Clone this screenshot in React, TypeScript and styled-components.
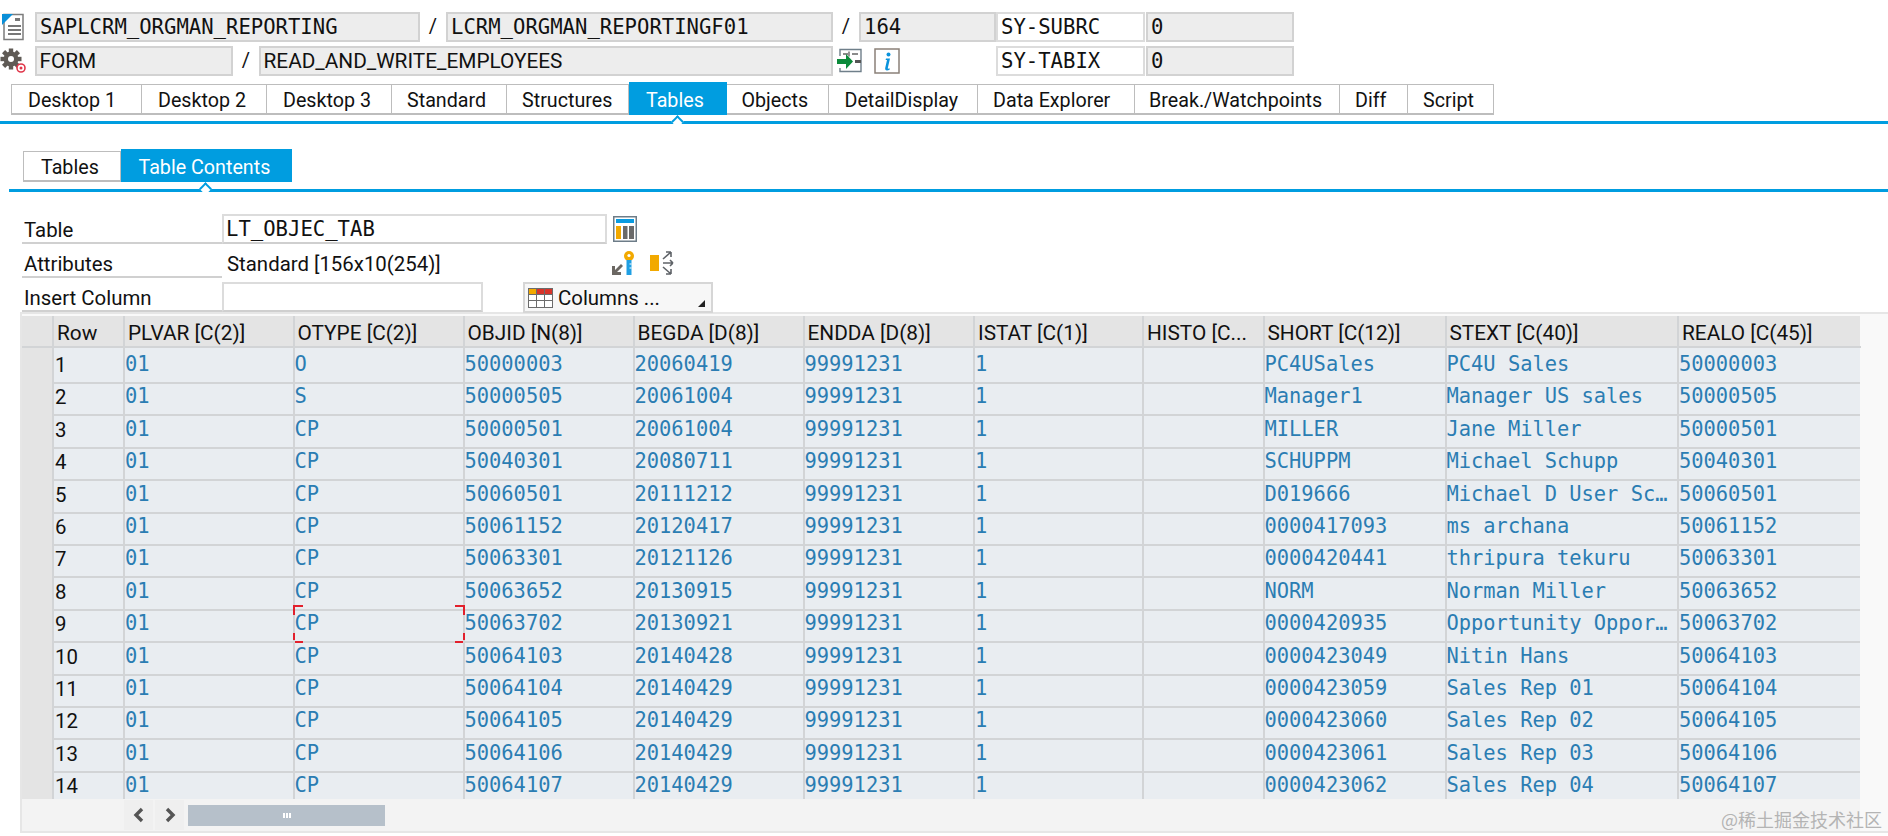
import React from "react";
import styled, { createGlobalStyle, css } from "styled-components";

const Global = createGlobalStyle`
  html, body { margin: 0; padding: 0; background: #fff; }
  #root { width: 1888px; height: 836px; overflow: hidden; }
`;

const UI = `Roboto, "Liberation Sans", sans-serif`;
const MONO = `"DejaVu Sans Mono", "Liberation Mono", monospace`;
const BLUE = "#009de0";
const GRID = "#d2d4d6";

const Page = styled.div`
  width: 1888px;
  height: 836px;
  position: relative;
  overflow: hidden;
  background: #fff;
  color: #111;
  font-family: ${UI};
  font-size: 20.4px;
`;

const Header = styled.div`
  padding-top: 12px;
  display: flex;
  flex-direction: column;
  gap: 4px;
`;

const Line = styled.div`
  display: flex;
  height: 30px;
  align-items: stretch;
`;

const IconSlot = styled.div<{ $w: number }>`
  width: ${(p) => p.$w}px;
  flex: none;
  display: flex;
  align-items: center;
`;

const Field = styled.div<{ $w: number; $mono?: boolean; $white?: boolean }>`
  width: ${(p) => p.$w}px;
  flex: none;
  box-sizing: border-box;
  border: 2px solid ${(p) => (p.$white ? "#dcdcdc" : "#d2d2d2")};
  background: ${(p) => (p.$white ? "#fff" : "#ededed")};
  padding-left: ${(p) => (p.$mono ? 3 : 2.5)}px;
  line-height: 26px;
  font-family: ${(p) => (p.$mono ? MONO : UI)};
  font-size: ${(p) => (p.$mono ? "20.6px" : "20.8px")};
  white-space: nowrap;
  overflow: hidden;
`;

const Slash = styled.div`
  width: 26px;
  flex: none;
  text-align: center;
  line-height: 28px;
  font-size: 20px;
`;

const Spacer = styled.div<{ $w: number }>`
  width: ${(p) => p.$w}px;
  flex: none;
`;

const TabBar = styled.div`
  margin-top: 6px;
  height: 39px;
  padding-left: 11px;
  display: flex;
  align-items: flex-start;
  border-bottom: 3px solid ${BLUE};
`;

const SubBar = styled(TabBar)`
  margin: 25px 0 0 9px;
  height: 40px;
  padding-left: 14px;
`;

const Tab = styled.div<{ $w: number; $pad: number; $active?: boolean }>`
  width: ${(p) => p.$w}px;
  flex: none;
  box-sizing: border-box;
  position: relative;
  padding-left: ${(p) => p.$pad}px;
  font-size: 19.7px;
  white-space: nowrap;
  ${(p) =>
    p.$active
      ? css`
          height: 33px;
          background: ${BLUE};
          color: #fff;
          line-height: 37px;
          &::after {
            content: "";
            position: absolute;
            left: 50%;
            bottom: -11px;
            width: 7px;
            height: 7px;
            margin-left: -5px;
            background: #fff;
            border-left: 2px solid ${BLUE};
            border-top: 2px solid ${BLUE};
            transform: rotate(45deg);
          }
        `
      : css`
          height: 31px;
          margin-top: 2px;
          background: #fff;
          border: 1px solid #bdbdbd;
          border-left-width: 0;
          border-bottom: 2px solid #bdbdbd;
          line-height: 32px;
          &:first-child {
            border-left-width: 1px;
          }
        `}
`;

const Form = styled.div`
  margin: 22px 0 0 22px;
  display: flex;
  flex-direction: column;
  gap: 4px;
`;

const FormRow = styled.div`
  display: flex;
  height: 30px;
  align-items: stretch;
`;

const Label = styled.div`
  width: 200px;
  flex: none;
  box-sizing: border-box;
  padding-left: 2px;
  border-bottom: 2px solid #d0d0d0;
  line-height: 33px;
`;

const Input = styled.div<{ $w: number }>`
  width: ${(p) => p.$w}px;
  flex: none;
  box-sizing: border-box;
  border: 2px solid #dcdcdc;
  border-bottom-color: #cfcfcf;
  padding-left: 2px;
  font-family: ${MONO};
  font-size: 20.6px;
  line-height: 26px;
  white-space: nowrap;
`;

const Plain = styled.div<{ $w: number }>`
  width: ${(p) => p.$w}px;
  flex: none;
  box-sizing: border-box;
  padding-left: 5px;
  line-height: 33px;
`;

const ColumnsButton = styled.div`
  margin-left: 40px;
  width: 190px;
  height: 31px;
  flex: none;
  box-sizing: border-box;
  border: 2px solid #d6d6d6;
  background: #f7f7f7;
  display: flex;
  align-items: center;
  gap: 5px;
  padding-left: 3px;
  position: relative;
  z-index: 1;
  &::after {
    content: "";
    position: absolute;
    right: 6px;
    bottom: 4px;
    border-style: solid;
    border-width: 0 0 7px 7px;
    border-color: transparent transparent #222 transparent;
  }
`;

const Panel = styled.div`
  margin: 0 0 0 20px;
  padding: 2px 28px 0 0;
  background: #f9f9f9;
  border: solid #e6e6e6;
  border-width: 2px 0 2px 2px;
`;

const COLS = "32px 71px 169.5px 170px 170px 170px 170.5px 169px 120.5px 182px 232.5px 182px";

const HeadRow = styled.div`
  display: grid;
  grid-template-columns: ${COLS};
  height: 32px;
  background: #e4e4e4;
`;

const HeadCell = styled.div<{ $pad?: number }>`
  box-sizing: border-box;
  padding-left: ${(p) => p.$pad ?? 3}px;
  font-size: 20.8px;
  line-height: 34px;
  border-right: 2px solid ${GRID};
  border-bottom: 2px solid ${GRID};
  white-space: nowrap;
  overflow: hidden;
  &:last-child {
    border-right: 0;
  }
`;

const Body = styled.div`
  height: 451px;
  overflow: hidden;
`;

const DataRow = styled.div<{ $h: number }>`
  display: grid;
  grid-template-columns: ${COLS};
  height: ${(p) => p.$h}px;
  background: #e9edf1;
`;

const Marker = styled.div`
  background: #e4e4e4;
  border-right: 2px solid ${GRID};
  border-bottom: 2px solid ${GRID};
`;

const RowNo = styled.div`
  box-sizing: border-box;
  padding-left: 1px;
  line-height: 34px;
  color: #111;
  border-right: 2px solid ${GRID};
  border-bottom: 2px solid ${GRID};
`;

const Cell = styled.div`
  box-sizing: border-box;
  font-family: ${MONO};
  font-size: 20.4px;
  line-height: 33px;
  color: #2b7db3;
  position: relative;
  white-space: nowrap;
  overflow: hidden;
  text-overflow: ellipsis;
  border-right: 2px solid ${GRID};
  border-bottom: 2px solid ${GRID};
  &:last-child {
    border-right: 0;
  }
`;

const FocusCell = styled(Cell)`
  overflow: visible;
`;

const Corner = styled.i<{ $x: "left" | "right"; $y: "top" | "bottom" }>`
  position: absolute;
  width: 8px;
  height: 8px;
  ${(p) => p.$x}: -2px;
  ${(p) => p.$y}: -2px;
  border-${(p) => p.$x}: 2px solid #e2202c;
  border-${(p) => p.$y}: 2px solid #e2202c;
`;

const ScrollArea = styled.div`
  height: 32px;
  display: flex;
  align-items: center;
  padding-left: 102px;
  gap: 2px;
  background: #f3f3f3;
`;

const ScrollBtn = styled.div`
  width: 29px;
  height: 30px;
  background: #efefef;
  display: flex;
  align-items: center;
  justify-content: center;
`;

const Thumb = styled.div`
  width: 197px;
  height: 21px;
  margin-left: 2px;
  background: #b6c0ca;
  display: flex;
  align-items: center;
  justify-content: center;
  gap: 1px;
`;

const Grip = styled.i`
  width: 2px;
  height: 5px;
  background: #fff;
`;

const Watermark = styled.div`
  position: absolute;
  right: 6px;
  bottom: 5px;
  font-family: "Noto Sans CJK SC", sans-serif;
  font-size: 18px;
  line-height: 24px;
  color: #b4b4b4;
  white-space: nowrap;
`;

const DocIcon = () => (
  <svg width="26" height="28" viewBox="0 0 26 28">
    <path d="M4 1.5h19v25H4z" fill="#fff" stroke="#7c7c7c" strokeWidth="1.5" />
    <path d="M2 1h11L2 12z" fill="#0a8fd8" />
    <path d="M15 5h5v3h-5zM8 12h13v2H8zM8 16h13v2H8zM8 20h13v2H8z" fill="#777" />
  </svg>
);

const GearIcon = () => (
  <svg width="28" height="26" viewBox="0 0 28 26">
    <g transform="translate(11 11)">
      <g fill="#5f5a55">
        {[0, 45, 90, 135].map((a) => (
          <rect key={a} x="-2.2" y="-10.5" width="4.4" height="21" transform={`rotate(${a})`} />
        ))}
      </g>
      <circle r="7.4" fill="#5f5a55" />
      <circle r="3" fill="#fff" />
    </g>
    <circle cx="21" cy="20" r="4" fill="#fff" stroke="#e0364a" strokeWidth="1.6" />
    <circle cx="21" cy="20" r="1.5" fill="#e0364a" />
  </svg>
);

const StepIcon = () => (
  <svg width="26" height="26" viewBox="0 0 26 26">
    <path d="M3 8V1.5h21v22H3V20" fill="#fff" stroke="#6f7f8a" strokeWidth="1.4" />
    <path d="M6 6h5M15 6h6M12 3.5v5" stroke="#666" strokeWidth="1.4" fill="none" />
    <path d="M0 11h9V6l7 7.5-7 7.5v-5H0z" fill="#0b8a3a" />
    <path d="M18 12h6v3h-6z" fill="#555" />
  </svg>
);

const InfoIcon = () => (
  <svg width="26" height="26" viewBox="0 0 26 26">
    <rect x="1" y="1" width="24" height="24" fill="#fff" stroke="#8a8078" strokeWidth="1.5" />
    <circle cx="14.5" cy="6.5" r="2" fill="#0a93dc" />
    <path d="M12 10.5h4l-2.2 9.5c-.2 1 .5 1 1.8.3v1.4c-2.4 1.2-5 1-4.4-1.6L13 12h-1.4z" fill="#0a93dc" />
  </svg>
);

const TableIcon = () => (
  <svg width="24" height="26" viewBox="0 0 24 26">
    <rect x=".75" y=".75" width="22.5" height="24.5" fill="#fff" stroke="#6d7c88" strokeWidth="1.5" />
    <rect x="3" y="3" width="18" height="4" fill="#0a9be0" />
    <rect x="3" y="10" width="5" height="13" fill="#f2a900" />
    <rect x="10" y="10" width="4.5" height="13" fill="#6a6a6a" />
    <rect x="16" y="10" width="5" height="13" fill="#6a6a6a" />
  </svg>
);

const KeyIcon = () => (
  <svg width="26" height="26" viewBox="0 0 26 26">
    <path d="M2 25h9v-3H7l6-6-2-2-6 6v-4H2z" fill="#6b6762" />
    <circle cx="19" cy="6" r="5" fill="#f2a900" />
    <circle cx="19" cy="5.5" r="1.6" fill="#fff" />
    <path d="M16.5 10h5v15h-5z" fill="#1f9fe3" />
    <path d="M19.5 14h2M19.5 18h2" stroke="#fff" strokeWidth="1.2" />
  </svg>
);

const BranchIcon = () => (
  <svg width="26" height="26" viewBox="0 0 26 26">
    <rect x="1" y="5" width="9" height="16" fill="#f2a900" />
    <path d="M14 9l8-7M22 2h-5M22 2v5M14 13h10M24 13l-3-3M24 13l-3 3M14 17l8 7M22 24h-5M22 24v-5" stroke="#5f6368" strokeWidth="1.6" fill="none" />
  </svg>
);

const ColumnsIcon = () => (
  <svg width="25" height="20" viewBox="0 0 25 20">
    <rect x=".5" y=".5" width="24" height="19" fill="#fff" stroke="#6b6b6b" />
    <rect x="1" y="1" width="7" height="5" fill="#f2a900" />
    <rect x="9" y="1" width="7" height="5" fill="#d8342a" />
    <rect x="17" y="1" width="7" height="5" fill="#d8342a" />
    <path d="M8.5 1v18M16.5 1v18M1 6.5h23M1 12.5h23" stroke="#6b6b6b" fill="none" />
  </svg>
);

const Chevron = ({ left }: { left?: boolean }) => (
  <svg width="12" height="16" viewBox="0 0 12 16">
    <path
      d={left ? "M9 2L3 8l6 6" : "M3 2l6 6-6 6"}
      fill="none"
      stroke="#555"
      strokeWidth="3.4"
    />
  </svg>
);

const TABS: [string, number, number][] = [
  ["Desktop 1", 131, 16],
  ["Desktop 2", 125, 16],
  ["Desktop 3", 125, 16],
  ["Standard", 115, 15],
  ["Structures", 122, 15],
  ["Tables", 97.5, 17],
  ["Objects", 102, 15],
  ["DetailDisplay", 149.5, 16],
  ["Data Explorer", 157, 15],
  ["Break./Watchpoints", 205, 14],
  ["Diff", 68, 15],
  ["Script", 86, 15],
];

const HEADS = [
  "PLVAR [C(2)]",
  "OTYPE [C(2)]",
  "OBJID [N(8)]",
  "BEGDA [D(8)]",
  "ENDDA [D(8)]",
  "ISTAT [C(1)]",
  "HISTO [C...",
  "SHORT [C(12)]",
  "STEXT [C(40)]",
  "REALO [C(45)]",
];

type R = [string, string, string, string, string, string];
const ROWS: R[] = [
  ["O", "50000003", "20060419", "PC4USales", "PC4U Sales", "50000003"],
  ["S", "50000505", "20061004", "Manager1", "Manager US sales", "50000505"],
  ["CP", "50000501", "20061004", "MILLER", "Jane Miller", "50000501"],
  ["CP", "50040301", "20080711", "SCHUPPM", "Michael Schupp", "50040301"],
  ["CP", "50060501", "20111212", "D019666", "Michael D User Sc…", "50060501"],
  ["CP", "50061152", "20120417", "0000417093", "ms archana", "50061152"],
  ["CP", "50063301", "20121126", "0000420441", "thripura tekuru", "50063301"],
  ["CP", "50063652", "20130915", "NORM", "Norman Miller", "50063652"],
  ["CP", "50063702", "20130921", "0000420935", "Opportunity Oppor…", "50063702"],
  ["CP", "50064103", "20140428", "0000423049", "Nitin Hans", "50064103"],
  ["CP", "50064104", "20140429", "0000423059", "Sales Rep 01", "50064104"],
  ["CP", "50064105", "20140429", "0000423060", "Sales Rep 02", "50064105"],
  ["CP", "50064106", "20140429", "0000423061", "Sales Rep 03", "50064106"],
  ["CP", "50064107", "20140429", "0000423062", "Sales Rep 04", "50064107"],
];

const rowHeight = (i: number) => Math.round((i + 1) * 32.4) - Math.round(i * 32.4);

export default function App() {
  return (
    <Page>
      <Global />
      <Header>
        <Line>
          <IconSlot $w={35}>
            <DocIcon />
          </IconSlot>
          <Field $w={385} $mono>SAPLCRM_ORGMAN_REPORTING</Field>
          <Slash>/</Slash>
          <Field $w={387} $mono>LCRM_ORGMAN_REPORTINGF01</Field>
          <Slash>/</Slash>
          <Field $w={137} $mono>164</Field>
          <Field $w={149} $mono $white>SY-SUBRC</Field>
          <Spacer $w={1} />
          <Field $w={148} $mono>0</Field>
        </Line>
        <Line>
          <IconSlot $w={35}>
            <GearIcon />
          </IconSlot>
          <Field $w={198}>FORM</Field>
          <Slash>/</Slash>
          <Field $w={574}>READ_AND_WRITE_EMPLOYEES</Field>
          <Spacer $w={4} />
          <IconSlot $w={37}>
            <StepIcon />
          </IconSlot>
          <IconSlot $w={122}>
            <InfoIcon />
          </IconSlot>
          <Field $w={149} $mono $white>SY-TABIX</Field>
          <Spacer $w={1} />
          <Field $w={148} $mono>0</Field>
        </Line>
      </Header>

      <TabBar>
        {TABS.map(([t, w, pad]) => (
          <Tab key={t} $w={w} $pad={pad} $active={t === "Tables"}>
            {t}
          </Tab>
        ))}
      </TabBar>

      <SubBar>
        <Tab $w={97.5} $pad={17}>Tables</Tab>
        <Tab $w={171.5} $pad={18} $active>Table Contents</Tab>
      </SubBar>

      <Form>
        <FormRow>
          <Label>Table</Label>
          <Input $w={385}>LT_OBJEC_TAB</Input>
          <Spacer $w={6} />
          <IconSlot $w={24}>
            <TableIcon />
          </IconSlot>
        </FormRow>
        <FormRow>
          <Label>Attributes</Label>
          <Plain $w={388}>Standard [156x10(254)]</Plain>
          <IconSlot $w={39}>
            <KeyIcon />
          </IconSlot>
          <IconSlot $w={26}>
            <BranchIcon />
          </IconSlot>
        </FormRow>
        <FormRow>
          <Label>Insert Column</Label>
          <Input $w={261} />
          <ColumnsButton>
            <ColumnsIcon />
            Columns ...
          </ColumnsButton>
        </FormRow>
      </Form>

      <Panel>
        <HeadRow>
          <HeadCell />
          <HeadCell $pad={3}>Row</HeadCell>
          {HEADS.map((h) => (
            <HeadCell key={h}>{h}</HeadCell>
          ))}
        </HeadRow>
        <Body>
          {ROWS.map((r, i) => (
            <DataRow key={i} $h={rowHeight(i)}>
              <Marker />
              <RowNo>{i + 1}</RowNo>
              <Cell>01</Cell>
              {i === 8 ? (
                <FocusCell>
                  {r[0]}
                  <Corner $x="left" $y="top" />
                  <Corner $x="right" $y="top" />
                  <Corner $x="left" $y="bottom" />
                  <Corner $x="right" $y="bottom" />
                </FocusCell>
              ) : (
                <Cell>{r[0]}</Cell>
              )}
              <Cell>{r[1]}</Cell>
              <Cell>{r[2]}</Cell>
              <Cell>99991231</Cell>
              <Cell>1</Cell>
              <Cell />
              <Cell>{r[3]}</Cell>
              <Cell>{r[4]}</Cell>
              <Cell>{r[5]}</Cell>
            </DataRow>
          ))}
        </Body>
        <ScrollArea>
          <ScrollBtn>
            <Chevron left />
          </ScrollBtn>
          <ScrollBtn>
            <Chevron />
          </ScrollBtn>
          <Thumb>
            <Grip />
            <Grip />
            <Grip />
          </Thumb>
        </ScrollArea>
      </Panel>
      <Watermark>@稀土掘金技术社区</Watermark>
    </Page>
  );
}
